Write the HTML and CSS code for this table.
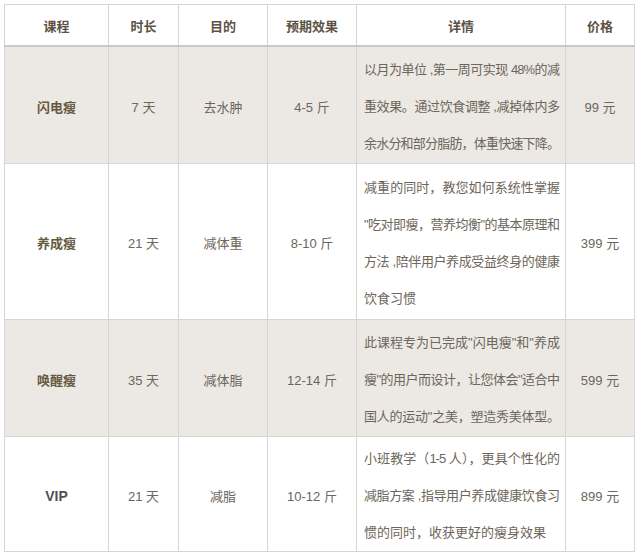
FILE: index.html
```html
<!DOCTYPE html>
<html lang="zh">
<head>
<meta charset="utf-8">
<link rel="stylesheet" href="styles.css">
</head>
<body>
<table class="price">
  <colgroup>
    <col class="c1"><col class="c2"><col class="c3"><col class="c4"><col class="c5"><col class="c6">
  </colgroup>
  <thead>
    <tr><th>课程</th><th>时长</th><th>目的</th><th>预期效果</th><th>详情</th><th>价格</th></tr>
  </thead>
  <tbody>
    <tr class="shade r3">
      <td class="name">闪电瘦</td><td>7 天</td><td>去水肿</td><td>4-5 斤</td>
      <td class="detail"><span class="l j">以月为单位 ,第一周可实现 48%的减</span><span class="l j">重效果。通过饮食调整 ,减掉体内多</span><span class="l j">余水分和部分脂肪，体重快速下降。</span></td>
      <td>99 元</td>
    </tr>
    <tr class="r4">
      <td class="name">养成瘦</td><td>21 天</td><td>减体重</td><td>8-10 斤</td>
      <td class="detail"><span class="l j">减重的同时，教您如何系统性掌握</span><span class="l j">"吃对即瘦，营养均衡"的基本原理和</span><span class="l j">方法 ,陪伴用户养成受益终身的健康</span><span class="l">饮食习惯</span></td>
      <td>399 元</td>
    </tr>
    <tr class="shade r3">
      <td class="name">唤醒瘦</td><td>35 天</td><td>减体脂</td><td>12-14 斤</td>
      <td class="detail"><span class="l j">此课程专为已完成"闪电瘦"和"养成</span><span class="l j">瘦"的用户而设计，让您体会"适合中</span><span class="l j">国人的运动"之美，塑造秀美体型。</span></td>
      <td>599 元</td>
    </tr>
    <tr class="r3b">
      <td class="name vip">VIP</td><td>21 天</td><td>减脂</td><td>10-12 斤</td>
      <td class="detail"><span class="l j">小班教学（1-5 人），更具个性化的</span><span class="l j">减脂方案 ,指导用户养成健康饮食习</span><span class="l">惯的同时，收获更好的瘦身效果</span></td>
      <td>899 元</td>
    </tr>
  </tbody>
</table>
</body>
</html>
```

FILE: styles.css
```css
html, body {
  margin: 0;
  padding: 0;
  background: #ffffff;
}
body {
  padding: 4px 0 0 4px;
  font-family: "Liberation Sans", "Noto Sans CJK SC", sans-serif;
  font-size: 13px;
  color: #6d665b;
}
.price {
  border-collapse: collapse;
  table-layout: fixed;
  width: 631px;
}
.c1 { width: 104px; }
.c2 { width: 70px; }
.c3 { width: 89px; }
.c4 { width: 89px; }
.c5 { width: 209px; }
.c6 { width: 69px; }
.price th,
.price td {
  border: 1px solid #d6d6d4;
  text-align: center;
  vertical-align: middle;
  padding: 0;
}
.price th {
  height: 40px;
  font-weight: bold;
  color: #5c5247;
  border-bottom: 2px solid #c9c9c7;
  background: #ffffff;
}
.price td {
  line-height: 37px;
  padding-top: 4px;
}
.shade td {
  background: #ece9e4;
}
.r3 td { height: 112px; }
.r4 td { height: 151px; }
.r3b td { height: 110px; }
.price td.detail {
  text-align: left;
  padding: 3px 7px 0 7px;
  white-space: nowrap;
  color: #6d665b;
}
.l {
  display: block;
  width: 195px;
}
.l.j {
  text-align: justify;
  text-align-last: justify;
  letter-spacing: -1px;
  white-space: normal;
}
.price td.name {
  font-weight: bold;
  color: #66593f;
}
.price td.vip {
  color: #55504a;
  font-size: 14px;
}
```
